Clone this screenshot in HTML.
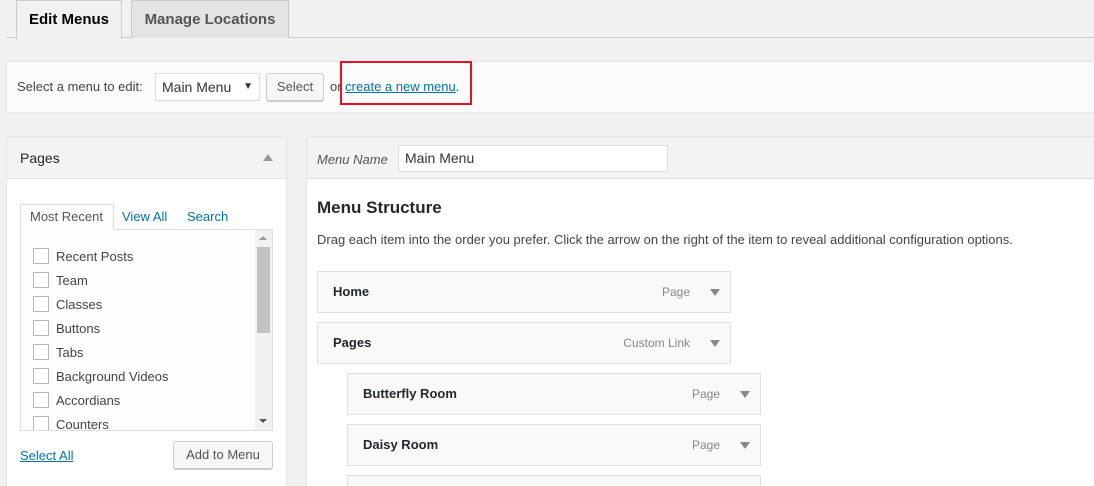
<!DOCTYPE html>
<html style="overflow:hidden;height:486px"><head><style>
*{box-sizing:border-box;margin:0;padding:0}
html,body{width:1094px;height:486px;overflow:hidden}
body{background:#f1f1f1;font-family:"Liberation Sans",sans-serif;font-size:13px;color:#444;position:relative}
.a{position:absolute}
.tab{position:absolute;top:0;height:38px;border:1px solid #ccc;border-bottom:none;font-weight:bold;font-size:15px;line-height:37px;text-align:center}
.cb{position:absolute;left:33px;width:16px;height:16px;border:1px solid #b4b9be;background:#fff}
.lbl{position:absolute;left:56px;color:#444}
.item{position:absolute;height:42px;width:414px;background:#f9f9f9;border:1px solid #dfdfdf;font-weight:bold;font-size:13px;color:#23282d;line-height:40px;padding-left:15px}
.item .t{position:absolute;right:40px;top:0;font-weight:normal;font-size:12px;color:#888}
.item .ar{position:absolute;right:10px;top:17px;width:0;height:0;border-left:5px solid transparent;border-right:5px solid transparent;border-top:7px solid #888}
.btn{position:absolute;background:#f7f7f7;border:1px solid #ccc;border-radius:3px;box-shadow:0 1px 0 #ccc;text-align:center;color:#555}
</style></head><body>
<div class="a" style="left:6px;right:0;top:37px;height:1px;background:#ccc"></div>
<div class="tab" style="left:16px;width:106px;background:#f1f1f1;color:#000;height:39px">Edit Menus</div>
<div class="tab" style="left:131px;width:158px;background:#e4e4e4;color:#555">Manage Locations</div>

<div class="a" style="left:6px;top:61px;width:1088px;height:52px;background:#fbfbfb;border:1px solid #e5e5e5;border-right:none"></div>
<div class="a" style="left:17px;top:79px">Select a menu to edit:</div>
<div class="a" style="left:155px;top:73px;width:105px;height:28px;background:#fff;border:1px solid #ddd;font-size:14px;line-height:26px;padding-left:6px;color:#333">Main Menu<span class="a" style="right:6px;top:0;font-size:10px">▼</span></div>
<div class="btn" style="left:266px;top:73px;width:58px;height:28px;line-height:26px">Select</div>
<div class="a" style="left:330px;top:79px">or <span style="color:#0073aa;text-decoration:underline">create a new menu</span>.</div>
<div class="a" style="left:340px;top:61px;width:132px;height:44px;border:2px solid #e81123"></div>

<div class="a" style="left:6px;top:136px;width:281px;height:350px;background:#fff;border:1px solid #e5e5e5;border-bottom:none"></div>
<div class="a" style="left:7px;top:137px;width:279px;height:42px;background:#f3f3f3;border-bottom:1px solid #e5e5e5"></div>
<div class="a" style="left:20px;top:150px;font-size:14px;color:#23282d">Pages</div>
<div class="a" style="left:263px;top:154px;border-left:5px solid transparent;border-right:5px solid transparent;border-bottom:7px solid #999"></div>
<div class="a" style="left:20px;top:229px;width:253px;height:202px;border:1px solid #ddd;background:#fdfdfd"></div>
<div class="a" style="left:20px;top:204px;width:94px;height:26px;border:1px solid #ddd;border-bottom:1px solid #fdfdfd;background:#fdfdfd;line-height:24px;padding-left:9px;color:#555">Most Recent</div>
<div class="a" style="left:122px;top:209px;color:#0073aa">View All</div>
<div class="a" style="left:187px;top:209px;color:#0073aa">Search</div>
<div class="a" style="left:255px;top:230px;width:17px;height:200px;background:#f1f1f1"></div>
<div class="a" style="left:259px;top:236px;border-left:4px solid transparent;border-right:4px solid transparent;border-bottom:4px solid #999"></div>
<div class="a" style="left:257px;top:247px;width:13px;height:86px;background:#c1c1c1"></div>
<div class="a" style="left:259px;top:419px;border-left:4px solid transparent;border-right:4px solid transparent;border-top:4px solid #555"></div>
<div class="cb" style="top:248px"></div><div class="lbl" style="top:249px">Recent Posts</div>
<div class="cb" style="top:272px"></div><div class="lbl" style="top:273px">Team</div>
<div class="cb" style="top:296px"></div><div class="lbl" style="top:297px">Classes</div>
<div class="cb" style="top:320px"></div><div class="lbl" style="top:321px">Buttons</div>
<div class="cb" style="top:344px"></div><div class="lbl" style="top:345px">Tabs</div>
<div class="cb" style="top:368px"></div><div class="lbl" style="top:369px">Background Videos</div>
<div class="cb" style="top:392px"></div><div class="lbl" style="top:393px">Accordians</div>
<div class="cb" style="top:416px;height:14px;border-bottom:none"></div><div class="lbl" style="top:417px;height:13px;overflow:hidden">Counters</div>
<div class="a" style="left:20px;top:448px;color:#0073aa;text-decoration:underline">Select All</div>
<div class="btn" style="left:173px;top:441px;width:100px;height:28px;line-height:26px">Add to Menu</div>

<div class="a" style="left:306px;top:136px;width:788px;height:350px;background:#fff;border:1px solid #e5e5e5;border-right:none;border-bottom:none"></div>
<div class="a" style="left:307px;top:137px;width:787px;height:42px;background:#f3f3f3;border-bottom:1px solid #dfdfdf"></div>
<div class="a" style="left:317px;top:152px;font-style:italic;color:#555">Menu Name</div>
<div class="a" style="left:398px;top:145px;width:270px;height:27px;background:#fff;border:1px solid #ddd;font-size:14px;line-height:25px;padding-left:6px;color:#333">Main Menu</div>
<div class="a" style="left:317px;top:198px;font-size:17px;font-weight:bold;color:#23282d">Menu Structure</div>
<div class="a" style="left:317px;top:232px;white-space:nowrap">Drag each item into the order you prefer. Click the arrow on the right of the item to reveal additional configuration options.</div>
<div class="item" style="left:317px;top:271px">Home<span class="t">Page</span><span class="ar"></span></div>
<div class="item" style="left:317px;top:322px">Pages<span class="t">Custom Link</span><span class="ar"></span></div>
<div class="item" style="left:347px;top:373px">Butterfly Room<span class="t">Page</span><span class="ar"></span></div>
<div class="item" style="left:347px;top:424px">Daisy Room<span class="t">Page</span><span class="ar"></span></div>
<div class="item" style="left:347px;top:475px;height:11px;border-bottom:none"></div>
</body></html>
